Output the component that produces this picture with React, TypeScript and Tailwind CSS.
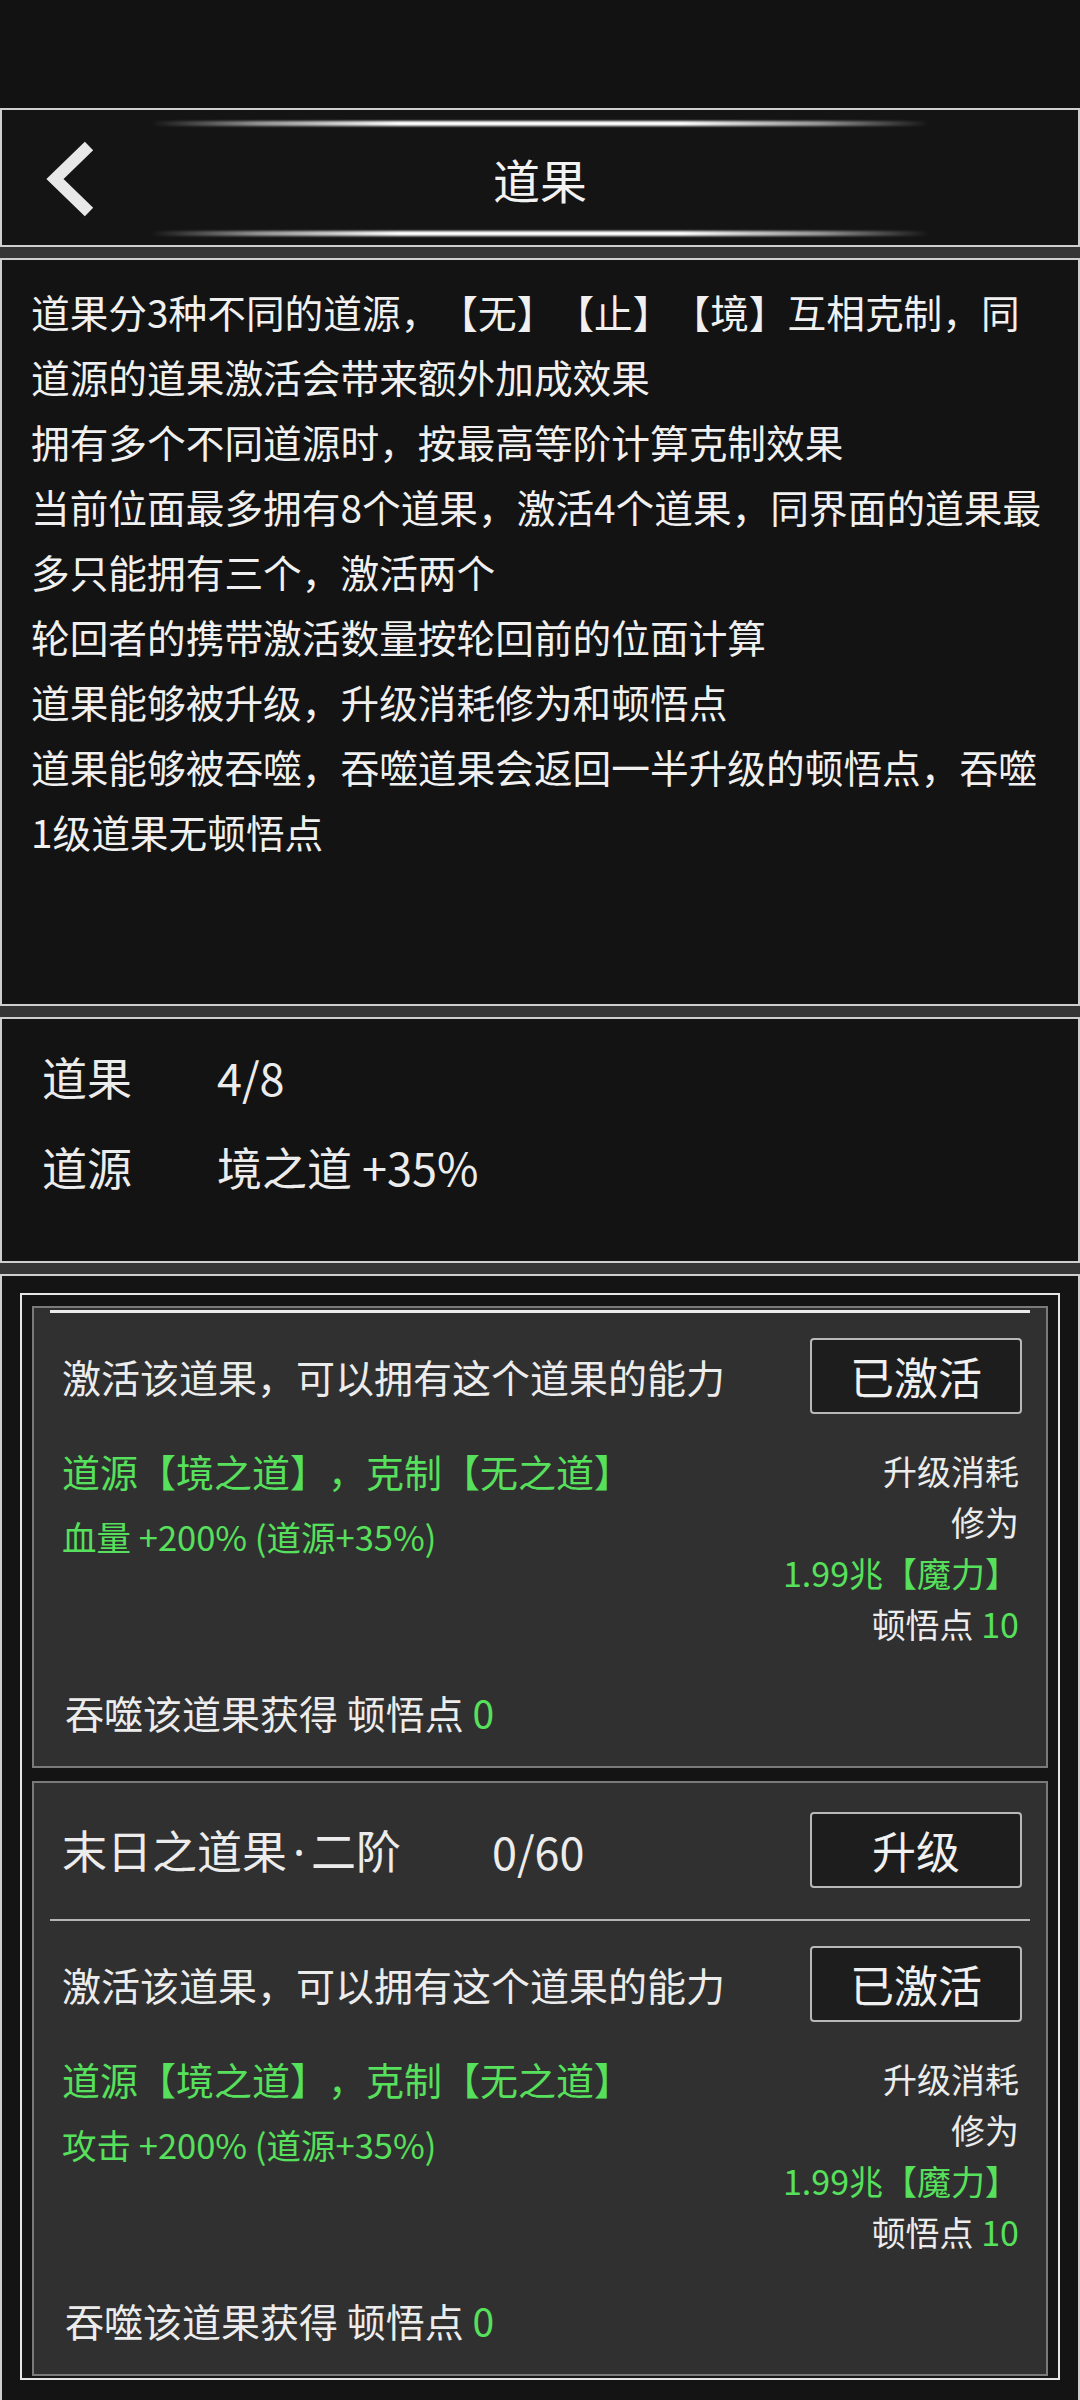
import React from "react";

function Gloss() {
  return (
    <div className="mx-auto h-[5px] w-[780px] blur-[0.8px] bg-[linear-gradient(to_right,rgba(255,255,255,0)_0%,rgba(255,255,255,0.55)_14%,#ffffff_32%,#ffffff_68%,rgba(255,255,255,0.55)_86%,rgba(255,255,255,0)_100%)]" />
  );
}

function Btn({ children }: { children: React.ReactNode }) {
  return (
    <div className="flex h-[76px] w-[212px] items-center justify-center rounded-[4px] border-2 border-[#b8b8b8] bg-[#1d1d1d] text-[44px] leading-none text-[#f0f0f0]">
      {children}
    </div>
  );
}

function Body({ effect }: { effect: string }) {
  return (
    <>
      <div className="mt-[25px] flex h-[76px] items-center justify-between pl-[28px] pr-[24px]">
        <span className="text-[39px] leading-none text-[#ececec]">激活该道果，可以拥有这个道果的能力</span>
        <Btn>已激活</Btn>
      </div>
      <div className="mt-[31px] flex justify-between pl-[28px] pr-[27px]">
        <div className="flex flex-col">
          <div className="h-[51px] text-[38px] leading-[51px] text-[#57e05c]">道源【境之道】，克制【无之道】</div>
          <div className="mt-[15px] h-[51px] text-[34.5px] leading-[51px] text-[#57e05c]">{effect}</div>
        </div>
        <div className="flex flex-col items-end text-right text-[34px] leading-[51px] text-[#ececec]">
          <div className="h-[51px]">升级消耗</div>
          <div className="h-[51px]">修为</div>
          <div className="h-[51px] text-[#57e05c]">1.99兆【魔力】</div>
          <div className="h-[51px]">
            顿悟点 <span className="text-[#57e05c]">10</span>
          </div>
        </div>
      </div>
      <div className="mt-[33px] h-[60px] pl-[31px] text-[39px] leading-[60px] text-[#ececec]">
        吞噬该道果获得 顿悟点 <span className="text-[#57e05c]">0</span>
      </div>
      <div className="h-[24px]" />
    </>
  );
}

export default function App() {
  const desc = [
    "道果分3种不同的道源，【无】【止】【境】互相克制，同",
    "道源的道果激活会带来额外加成效果",
    "拥有多个不同道源时，按最高等阶计算克制效果",
    "当前位面最多拥有8个道果，激活4个道果，同界面的道果最",
    "多只能拥有三个，激活两个",
    "轮回者的携带激活数量按轮回前的位面计算",
    "道果能够被升级，升级消耗修为和顿悟点",
    "道果能够被吞噬，吞噬道果会返回一半升级的顿悟点，吞噬",
    "1级道果无顿悟点",
  ];

  return (
    <div className="flex h-[2400px] w-[1080px] flex-col overflow-hidden bg-[#363636] font-['Noto_Sans_CJK_SC','Noto_Sans',sans-serif] text-[#efefef] [text-spacing-trim:space-all]">
      <div className="h-[108px] shrink-0 bg-[#121212]" />

      <div className="flex flex-1 flex-col gap-[11px]">
        {/* Header */}
        <div className="flex h-[139px] shrink-0 flex-col border-2 border-[#cfcfcf] bg-[#141414]">
          <div className="mt-[11px]">
            <Gloss />
          </div>
          <div className="grid h-[105px] grid-cols-[1fr_auto_1fr] items-center">
            <div className="pl-[37px]">
              <svg width="62" height="82" viewBox="0 0 62 82">
                <polyline
                  points="50,8 16,41 50,74"
                  fill="none"
                  stroke="#e8e8e8"
                  strokeWidth="12"
                  strokeLinecap="butt"
                  strokeLinejoin="miter"
                />
              </svg>
            </div>
            <div className="text-[47px] leading-none text-[#f2f2f2]">道果</div>
            <div />
          </div>
          <Gloss />
        </div>

        {/* Description */}
        <div className="h-[748px] shrink-0 border-2 border-[#cfcfcf] bg-[#131313] pl-[29px] pt-[19px]">
          {desc.map((l, i) => (
            <div key={i} className="h-[65px] whitespace-nowrap text-[38.7px] leading-[65px] text-[#f0f0f0]">
              {l}
            </div>
          ))}
        </div>

        {/* Stats */}
        <div className="h-[246px] shrink-0 border-2 border-[#cfcfcf] bg-[#131313] pl-[40px] pt-[12px] text-[45px] text-[#ececec]">
          <div className="flex h-[90px] items-center leading-none">
            <span className="w-[175px]">道果</span>
            <span>4/8</span>
          </div>
          <div className="flex h-[90px] items-center leading-none">
            <span className="w-[175px]">道源</span>
            <span>境之道 +35%</span>
          </div>
        </div>

        {/* List */}
        <div className="flex-1 border-2 border-b-0 border-[#cfcfcf] bg-[#141414] px-[18px] pt-[17px]">
          <div className="border-2 border-[#e6e6e6] px-[10px] pb-[2px] pt-[11px]">
            {/* Card 1 (scrolled) */}
            <div className="border-2 border-[#7a7a7a] bg-[#303030]">
              <div className="mx-[16px] mt-[2px] h-[3px] bg-[#ececec]" />
              <Body effect="血量 +200% (道源+35%)" />
            </div>

            {/* Card 2 */}
            <div className="mt-[13px] border-2 border-[#7a7a7a] bg-[#303030]">
              <div className="mt-[29px] flex h-[76px] items-center justify-between pl-[28px] pr-[24px]">
                <div className="flex items-center text-[45px] leading-none text-[#ececec]">
                  <span className="w-[430px]">
                    末日之道果<span className="px-[6px] font-['Noto_Sans',sans-serif]">·</span>二阶
                  </span>
                  <span>0/60</span>
                </div>
                <Btn>升级</Btn>
              </div>
              <div className="mx-[16px] mt-[31px] h-[2px] bg-[#b4b4b4]" />
              <Body effect="攻击 +200% (道源+35%)" />
            </div>
          </div>
        </div>
      </div>
    </div>
  );
}
